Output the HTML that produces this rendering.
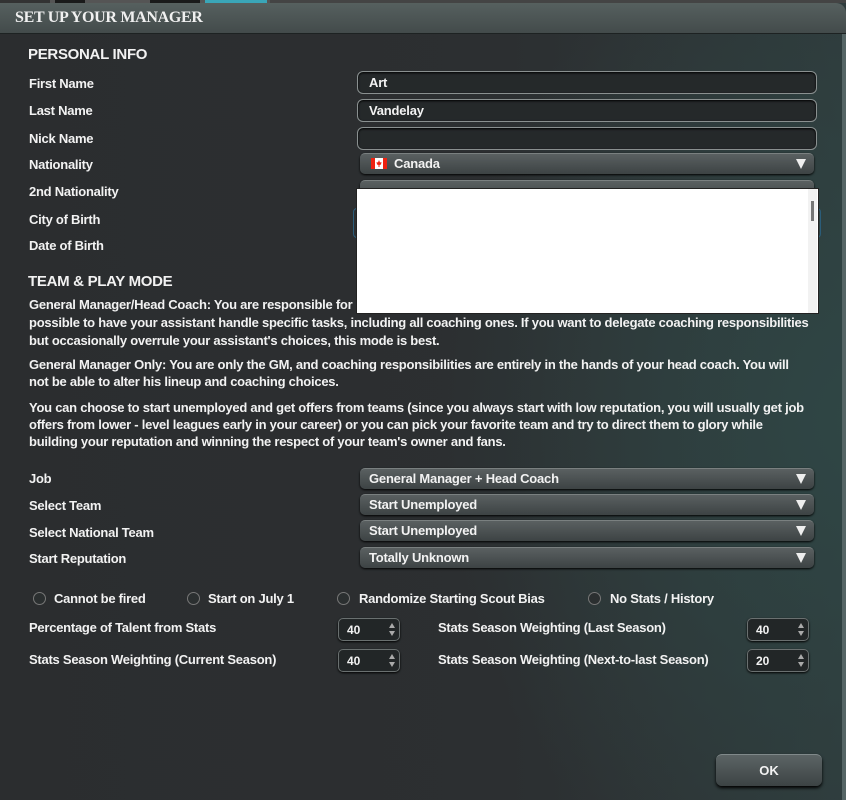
<!DOCTYPE html>
<html><head><meta charset="utf-8">
<style>
*{margin:0;padding:0;box-sizing:border-box}
html,body{width:846px;height:800px;overflow:hidden;background:#222}
body{font-family:"Liberation Sans",sans-serif;font-weight:bold;color:#f2f2f2;position:relative}
#bg{position:absolute;left:0;top:0;width:846px;height:800px;
background:radial-gradient(ellipse 420px 520px at 860px 420px,#2f4645 0%,rgba(47,70,69,0) 100%),linear-gradient(90deg,#2b2d2f 0%,#2c2f31 60%,#2f3a3b 100%);}
#tabs{position:absolute;left:0;top:0;width:846px;height:3px;background:#555}
#tabs i{position:absolute;top:0;height:3px;background:#1a1a1a}
#title{position:absolute;left:0;top:3px;width:846px;height:31px;background:linear-gradient(#56605f,#434b4b);border-bottom:1px solid #1d2222;border-radius:0 10px 0 0}
#title span{position:absolute;left:15px;top:6px;font-family:"Liberation Serif",serif;font-size:16px;letter-spacing:-0.3px;color:#f0f0f0}
#rb{position:absolute;right:0;top:34px;width:4px;height:766px;background:#556565}
.t{position:absolute;font-size:13px;letter-spacing:-0.25px;white-space:nowrap;line-height:15px}
.h{position:absolute;font-size:15px;letter-spacing:-0.3px;white-space:nowrap}
.in{position:absolute;left:357px;width:460px;height:23px;border:1.5px solid #8a9090;border-radius:6px;background:#25292a;box-shadow:inset 0 1px 2px #000}
.in span{position:absolute;left:11px;top:3px;font-size:13px;letter-spacing:-0.2px}
.dd{position:absolute;left:360px;width:454px;height:21px;border-radius:5px;background:linear-gradient(#5a6061,#3d4344);box-shadow:0 1px 2px #000;border-top:1px solid #7a8080}
.dd span{position:absolute;left:9px;top:2px;font-size:13px;letter-spacing:-0.2px}
.dd b{position:absolute;right:8px;top:5px;width:0;height:0;border-left:5px solid transparent;border-right:5px solid transparent;border-top:10px solid #eee}
.cb{position:absolute;width:13px;height:13px;border-radius:50%;border:1px solid #777;background:#2b2f30;top:592px}
.sp{position:absolute;width:62px;height:23px;border-radius:5px;background:#222627;border:1.5px solid #6a7070;box-shadow:0 1px 2px #000}
.sp span{position:absolute;left:8px;top:4px;font-size:12px}
.sp i{position:absolute;right:4px;width:0;height:0;border-left:3px solid transparent;border-right:3px solid transparent}
.sp .u{top:4px;border-bottom:5px solid #aaa}
.sp .d{top:12px;border-top:5px solid #aaa}
#ok{position:absolute;left:716px;top:754px;width:106px;height:32px;border-radius:6px;background:linear-gradient(#5c6465,#3c4344);box-shadow:0 2px 3px #000;border-top:1px solid #80898a;text-align:center;line-height:31px;font-size:13px}
</style></head><body>
<div id="bg"></div>
<div id="tabs"><i style="left:0;width:50px;background:#333"></i><i style="left:55px;width:30px"></i><i style="left:150px;width:50px"></i><i style="left:205px;width:62px;background:#3aa6b8"></i><i style="left:270px;width:576px;background:#444"></i></div>
<div id="title"><span>SET UP YOUR MANAGER</span></div>
<div id="rb"></div>

<div class="h" style="left:28px;top:46px">PERSONAL INFO</div>
<div class="t" style="left:29px;top:76px">First Name</div>
<div class="t" style="left:29px;top:103px">Last Name</div>
<div class="t" style="left:29px;top:131px">Nick Name</div>
<div class="t" style="left:29px;top:157px">Nationality</div>
<div class="t" style="left:29px;top:184px">2nd Nationality</div>
<div class="t" style="left:29px;top:212px">City of Birth</div>
<div class="t" style="left:29px;top:238px">Date of Birth</div>

<div class="in" style="top:71px"><span>Art</span></div>
<div class="in" style="top:99px"><span>Vandelay</span></div>
<div class="in" style="top:127px"></div>
<div class="dd" style="top:153px"><span style="left:11px"><svg width="16" height="11" style="vertical-align:-1px;margin-right:7px"><rect width="16" height="11" fill="#fff"/><rect width="4" height="11" fill="#e21"/><rect x="12" width="4" height="11" fill="#e21"/><path d="M8 2 L9 4.5 L10.5 4 L10 6.5 L8.5 7 L8.5 9 L7.5 9 L7.5 7 L6 6.5 L5.5 4 L7 4.5 Z" fill="#e21"/></svg>Canada</span><b></b></div>
<div class="dd" style="top:180px"></div>
<div style="position:absolute;left:353px;top:208px;width:468px;height:30px;border:1px solid #2b5d7a;border-radius:4px"></div>

<div class="h" style="left:28px;top:273px">TEAM &amp; PLAY MODE</div>
<div class="t" style="left:29px;top:297px">General Manager/Head Coach: You are responsible for all aspects of running the team. It is still</div>
<div style="position:absolute;left:356px;top:188px;width:463px;height:126px;background:#fff;border:1px solid #222"><i style="position:absolute;right:1px;top:0;width:9px;height:124px;background:#f2f2f2"></i><i style="position:absolute;right:4px;top:12px;width:3px;height:20px;background:#777"></i></div>
<div class="t" style="left:29px;top:315px">possible to have your assistant handle specific tasks, including all coaching ones. If you want to delegate coaching responsibilities</div>
<div class="t" style="left:29px;top:333px">but occasionally overrule your assistant's choices, this mode is best.</div>
<div class="t" style="left:29px;top:357px">General Manager Only: You are only the GM, and coaching responsibilities are entirely in the hands of your head coach. You will</div>
<div class="t" style="left:29px;top:374px">not be able to alter his lineup and coaching choices.</div>
<div class="t" style="left:29px;top:400px">You can choose to start unemployed and get offers from teams (since you always start with low reputation, you will usually get job</div>
<div class="t" style="left:29px;top:417px">offers from lower - level leagues early in your career) or you can pick your favorite team and try to direct them to glory while</div>
<div class="t" style="left:29px;top:434px">building your reputation and winning the respect of your team's owner and fans.</div>

<div class="t" style="left:29px;top:471px">Job</div>
<div class="t" style="left:29px;top:498px">Select Team</div>
<div class="t" style="left:29px;top:525px">Select National Team</div>
<div class="t" style="left:29px;top:551px">Start Reputation</div>
<div class="dd" style="top:468px"><span>General Manager + Head Coach</span><b></b></div>
<div class="dd" style="top:494px"><span>Start Unemployed</span><b></b></div>
<div class="dd" style="top:520px"><span>Start Unemployed</span><b></b></div>
<div class="dd" style="top:547px"><span>Totally Unknown</span><b></b></div>

<div class="cb" style="left:33px"></div><div class="t" style="left:54px;top:591px">Cannot be fired</div>
<div class="cb" style="left:187px"></div><div class="t" style="left:208px;top:591px">Start on July 1</div>
<div class="cb" style="left:337px"></div><div class="t" style="left:359px;top:591px">Randomize Starting Scout Bias</div>
<div class="cb" style="left:588px"></div><div class="t" style="left:610px;top:591px">No Stats / History</div>

<div class="t" style="left:29px;top:620px">Percentage of Talent from Stats</div>
<div class="t" style="left:29px;top:652px">Stats Season Weighting (Current Season)</div>
<div class="t" style="left:438px;top:620px">Stats Season Weighting (Last Season)</div>
<div class="t" style="left:438px;top:652px">Stats Season Weighting (Next-to-last Season)</div>
<div class="sp" style="left:338px;top:618px"><span>40</span><i class="u"></i><i class="d"></i></div>
<div class="sp" style="left:338px;top:649px"><span>40</span><i class="u"></i><i class="d"></i></div>
<div class="sp" style="left:747px;top:618px"><span>40</span><i class="u"></i><i class="d"></i></div>
<div class="sp" style="left:747px;top:649px"><span>20</span><i class="u"></i><i class="d"></i></div>

<div id="ok">OK</div>
</body></html>
